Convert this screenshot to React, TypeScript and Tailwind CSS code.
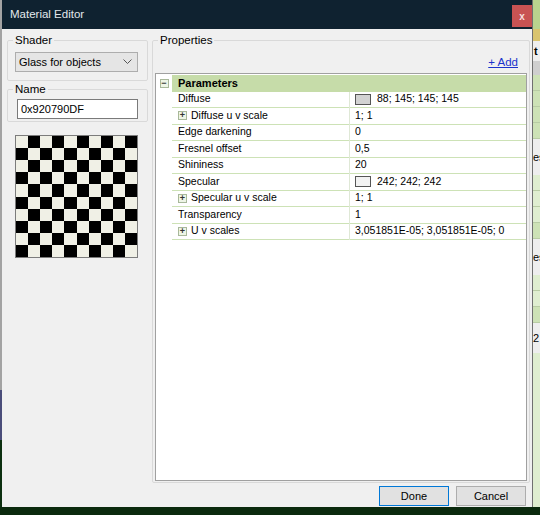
import React from 'react';

type Row = {
  label: string;
  value: string;
  expandable?: boolean;
  swatch?: string;
};

const rows: Row[] = [
  { label: 'Diffuse', value: '88; 145; 145; 145', swatch: '#d2d2d2' },
  { label: 'Diffuse u v scale', value: '1; 1', expandable: true },
  { label: 'Edge darkening', value: '0' },
  { label: 'Fresnel offset', value: '0,5' },
  { label: 'Shininess', value: '20' },
  { label: 'Specular', value: '242; 242; 242', swatch: '#f2f2f2' },
  { label: 'Specular u v scale', value: '1; 1', expandable: true },
  { label: 'Transparency', value: '1' },
  { label: 'U v scales', value: '3,051851E-05; 3,051851E-05; 0', expandable: true },
];

function Checker() {
  const cells = [];
  for (let r = 0; r < 10; r++) {
    for (let c = 0; c < 10; c++) {
      const dark = (r + c) % 2 === 1;
      cells.push(
        <div key={`${r}-${c}`} className={dark ? 'bg-black' : 'bg-[#f0f0e6]'} />
      );
    }
  }
  return (
    <div className="w-[123px] h-[123px] border border-[#7c7c7c] grid grid-cols-10 grid-rows-10">
      {cells}
    </div>
  );
}

function ExpandBox({ sign }: { sign: string }) {
  return (
    <span className="w-[9px] h-[9px] border border-[#a8b89a] bg-[#eef5e6] flex items-center justify-center text-[9px] leading-none text-[#333] font-bold">
      {sign}
    </span>
  );
}

function PropertyRow({ row }: { row: Row }) {
  return (
    <div className="flex h-[16.5px]">
      <div className="w-[16px] shrink-0" />
      <div className="w-[177px] shrink-0 border-b border-[#cde2b6] flex items-center pl-[6px] gap-[4px]">
        {row.expandable && <ExpandBox sign="+" />}
        <span>{row.label}</span>
      </div>
      <div className="w-[1px] bg-[#dfe8d6]" />
      <div className="flex-1 border-b border-[#cde2b6] flex items-center pl-[5px] gap-[6px]">
        {row.swatch && (
          <span
            className="w-[16px] h-[11px] border border-[#555]"
            style={{ backgroundColor: row.swatch }}
          />
        )}
        <span>{row.value}</span>
      </div>
    </div>
  );
}

export default function App() {
  return (
    <div className="w-[540px] h-[515px] flex flex-col overflow-hidden bg-[#0b2a0e] font-['Liberation_Sans',Arial,sans-serif] text-[#000]">
      <div className="flex h-[507px]">
        {/* desktop behind, left edge */}
        <div className="w-[2px] shrink-0 flex flex-col">
          <div className="h-[390px] bg-[#a3a3a3]" />
          <div className="h-[50px] bg-[#4a4d7a]" />
          <div className="flex-1 bg-[#0d3010]" />
        </div>

        {/* dialog */}
        <div className="w-[531px] shrink-0 flex flex-col bg-[#f0f0f0] border-r border-[#707070]">
          <div className="h-[29px] shrink-0 bg-[#0f2230] flex justify-between pl-[8px]">
            <span className="self-center text-[11.5px] text-[#e3e8ec]">Material Editor</span>
            <div className="mt-[5px] w-[20px] h-[22px] bg-[#c85353] flex items-center justify-center text-[10px] font-bold text-[#f6dede]">
              x
            </div>
          </div>

          <div className="flex-1 flex flex-col pt-[5px] pb-[2px]">
            <div className="flex-1 flex min-h-0">
              {/* left column */}
              <div className="ml-[5px] w-[141px] shrink-0 flex flex-col text-[11.5px]">
                <fieldset className="border border-[#d9d9d9] rounded-[2px] pt-[5px] pb-[8px] pl-[7px] pr-[9px]">
                  <legend className="-ml-[2px] px-[2px] leading-[13px]">Shader</legend>
                  <div className="h-[20px] bg-[#e5e5e5] border border-[#adadad] flex items-center justify-between pl-[3px] pr-[5px] text-[11px]">
                    <span>Glass for objects</span>
                    <svg width="9" height="6" viewBox="0 0 9 6">
                      <path d="M0.5 0.5 L4.5 4.5 L8.5 0.5" fill="none" stroke="#555" strokeWidth="1" />
                    </svg>
                  </div>
                </fieldset>
                <fieldset className="mt-[2px] border border-[#d9d9d9] rounded-[2px] pt-[3px] pb-[2px] pl-[9px] pr-[9px]">
                  <legend className="-ml-[4px] px-[2px] leading-[13px]">Name</legend>
                  <div className="h-[20px] bg-white border border-[#7a7a7a] flex items-center pl-[3px] text-[11px]">
                    0x920790DF
                  </div>
                </fieldset>
                <div className="mt-[13px] ml-[8px]">
                  <Checker />
                </div>
              </div>

              {/* properties */}
              <fieldset className="ml-[4px] w-[378px] shrink-0 border border-[#d9d9d9] rounded-[2px] px-[2px] pb-[1px] flex flex-col min-h-0 text-[11.5px]">
                <legend className="ml-[3px] px-[2px] leading-[13px]">Properties</legend>
                <div className="mt-[9px] h-[13px] flex justify-end pr-[9px] leading-[13px]">
                  <span className="text-[#1a33cc] underline text-[11.5px]">+ Add</span>
                </div>
                <div className="mt-[4px] h-[408px] bg-white border border-[#a0a0a0] pt-[1px] text-[10.5px]">
                  <div className="flex h-[16.5px]">
                    <div className="w-[16px] shrink-0 flex items-center justify-center">
                      <ExpandBox sign="−" />
                    </div>
                    <div className="flex-1 bg-[#c6dca9] flex items-center pl-[6px] font-bold text-[11px]">
                      Parameters
                    </div>
                  </div>
                  {rows.map(row => (
                    <PropertyRow key={row.label} row={row} />
                  ))}
                </div>
              </fieldset>
            </div>

            {/* buttons */}
            <div className="mt-[3px] h-[20px] flex justify-end gap-[7px] pr-[6px] text-[11px]">
              <button className="w-[70px] h-[20px] bg-[#e1e1e1] border border-[#0078d7]">Done</button>
              <button className="w-[70px] h-[20px] bg-[#e1e1e1] border border-[#adadad]">Cancel</button>
            </div>
          </div>
        </div>

        {/* desktop behind, right edge */}
        <div className="flex-1 min-w-0 overflow-hidden flex flex-col bg-[#eeeeee] text-[11px] leading-none">
          <div className="h-[29px] bg-[#b9d38e]" />
          <div className="h-[12px] bg-[#d9c46e]" />
          <div className="h-[20px] flex items-center font-bold pl-[1px]">t</div>
          <div className="h-[14px] bg-[#cfcfcf]" />
          <div className="h-[16px] bg-[#cde2b6] border-b border-[#b8cca4]" />
          <div className="h-[16px] bg-[#cde2b6] border-b border-[#b8cca4]" />
          <div className="h-[16px] bg-[#cde2b6] border-b border-[#b8cca4]" />
          <div className="h-[16px] bg-[#cde2b6] border-b border-[#b8cca4]" />
          <div className="h-[36px] flex items-center">es</div>
          <div className="h-[16px] bg-[#dfeed0] border-b border-[#b8cca4]" />
          <div className="h-[16px] bg-[#dfeed0] border-b border-[#b8cca4]" />
          <div className="h-[16px] bg-[#dfeed0] border-b border-[#b8cca4]" />
          <div className="h-[16px] bg-[#cde2b6] border-b border-[#b8cca4]" />
          <div className="h-[36px] flex items-center">es</div>
          <div className="h-[16px] bg-[#dfeed0] border-b border-[#b8cca4]" />
          <div className="h-[16px] bg-[#dfeed0] border-b border-[#b8cca4]" />
          <div className="h-[16px] bg-[#cde2b6] border-b border-[#b8cca4]" />
          <div className="h-[30px] flex items-center">2</div>
          <div className="flex-1 bg-[#dfeed0]" />
        </div>
      </div>
      <div className="flex-1 bg-[#0b2a0e]" />
    </div>
  );
}
